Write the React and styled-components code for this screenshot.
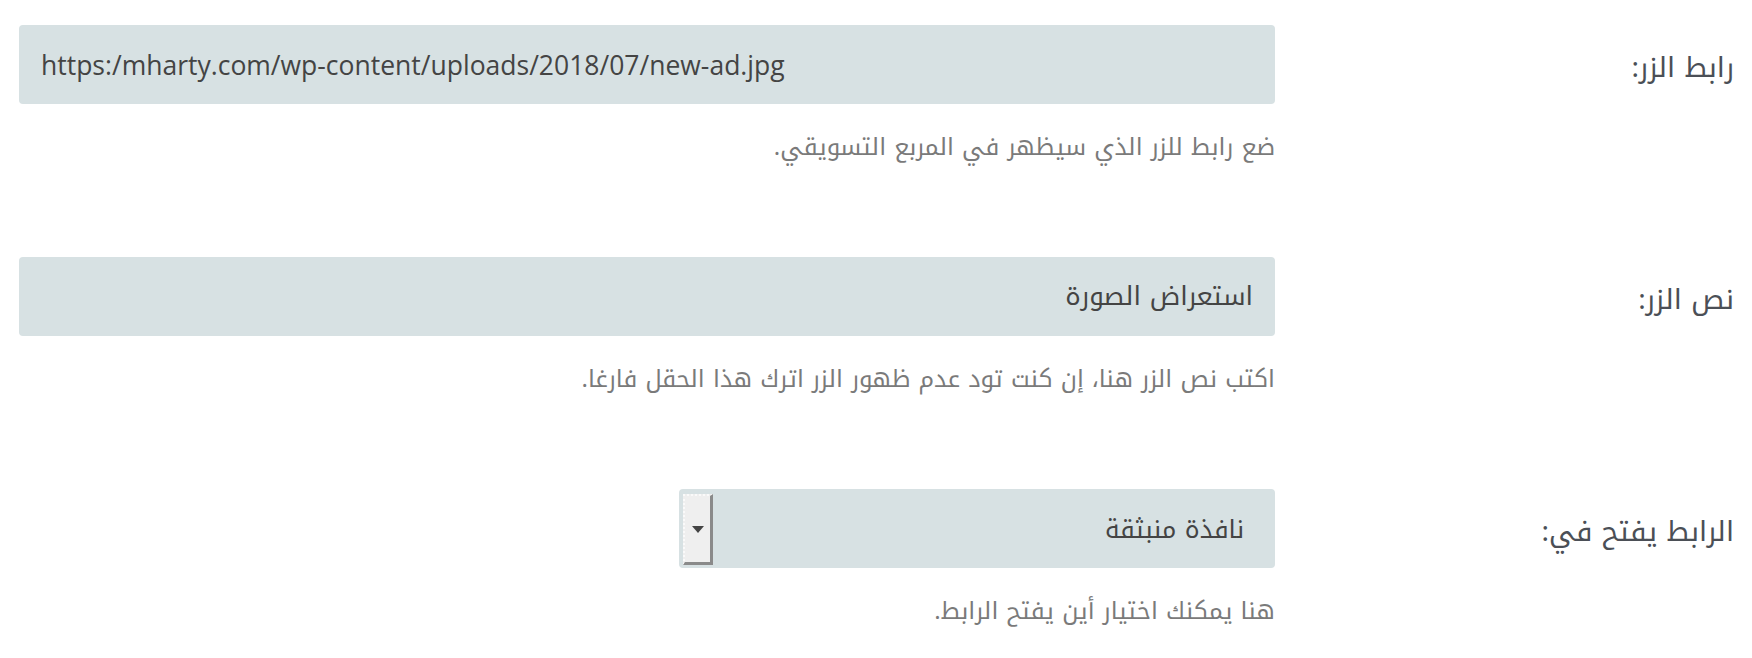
import styled, { createGlobalStyle } from "styled-components";

const arabic = `"Noto Kufi Arabic", "Noto Sans Arabic", "DejaVu Sans", sans-serif`;

const GlobalStyle = createGlobalStyle`
  html, body {
    margin: 0;
    padding: 0;
    background: #ffffff;
  }
  body {
    font-family: ${arabic};
  }
`;

const Form = styled.div`
  direction: rtl;
  width: 1752px;
  padding-left: 19px;
  box-sizing: border-box;
`;

const Row = styled.div`
  display: flex;
  align-items: flex-start;
  height: 232px;
  padding-top: 25px;
  box-sizing: border-box;

  &:last-child {
    height: auto;
  }
`;

const Label = styled.label`
  width: 477px;
  flex: none;
  box-sizing: border-box;
  padding: 23px 18px 0 0;
  font-family: ${arabic};
  font-size: 28px;
  line-height: 40px;
  color: #4b4f56;
`;

const Field = styled.div`
  flex: 1;
  display: flex;
  flex-direction: column;
  align-items: flex-start;
`;

const TextInput = styled.input`
  width: 100%;
  height: 79px;
  box-sizing: border-box;
  border: none;
  border-radius: 4px;
  background: #d7e1e3;
  padding: 0 22px;
  font-family: ${(p) => (p.$ltr ? `"Open Sans", sans-serif` : arabic)};
  font-size: ${(p) => (p.$ltr ? "26.5px" : "26px")};
  color: #444;
  outline: none;
  direction: ${(p) => (p.$ltr ? "ltr" : "rtl")};
`;

const SelectBox = styled.div`
  width: 596px;
  height: 79px;
  box-sizing: border-box;
  border-radius: 4px;
  background: #d7e1e3;
  display: flex;
  align-items: center;
  justify-content: space-between;
  padding: 5px 31px 3px 4px;
`;

const SelectValue = styled.span`
  font-family: ${arabic};
  font-size: 25px;
  color: #444;
`;

const DropButton = styled.span`
  width: 30px;
  height: 71px;
  box-sizing: border-box;
  background: #efefef;
  border-top: 2px dotted #fafafa;
  border-left: 2px dotted #fafafa;
  border-right: 3px solid #8a8a8a;
  border-bottom: 3px solid #8a8a8a;
  display: flex;
  align-items: center;
  justify-content: center;
`;

const Arrow = styled.span`
  width: 0;
  height: 0;
  border-left: 6px solid transparent;
  border-right: 6px solid transparent;
  border-top: 7px solid #444;
`;

const Help = styled.p`
  margin: 27px 0 0;
  font-family: ${arabic};
  font-size: 24px;
  line-height: 32px;
  color: #7a7a7a;
`;

export default function App() {
  return (
    <>
      <GlobalStyle />
      <Form>
        <Row>
          <Label>رابط الزر:</Label>
          <Field>
            <TextInput
              $ltr
              readOnly
              value="https:/mharty.com/wp-content/uploads/2018/07/new-ad.jpg"
            />
            <Help>ضع رابط للزر الذي سيظهر في المربع التسويقي.</Help>
          </Field>
        </Row>
        <Row>
          <Label>نص الزر:</Label>
          <Field>
            <TextInput readOnly value="استعراض الصورة" />
            <Help>اكتب نص الزر هنا، إن كنت تود عدم ظهور الزر اترك هذا الحقل فارغا.</Help>
          </Field>
        </Row>
        <Row>
          <Label>الرابط يفتح في:</Label>
          <Field>
            <SelectBox>
              <SelectValue>نافذة منبثقة</SelectValue>
              <DropButton>
                <Arrow />
              </DropButton>
            </SelectBox>
            <Help>هنا يمكنك اختيار أين يفتح الرابط.</Help>
          </Field>
        </Row>
      </Form>
    </>
  );
}
